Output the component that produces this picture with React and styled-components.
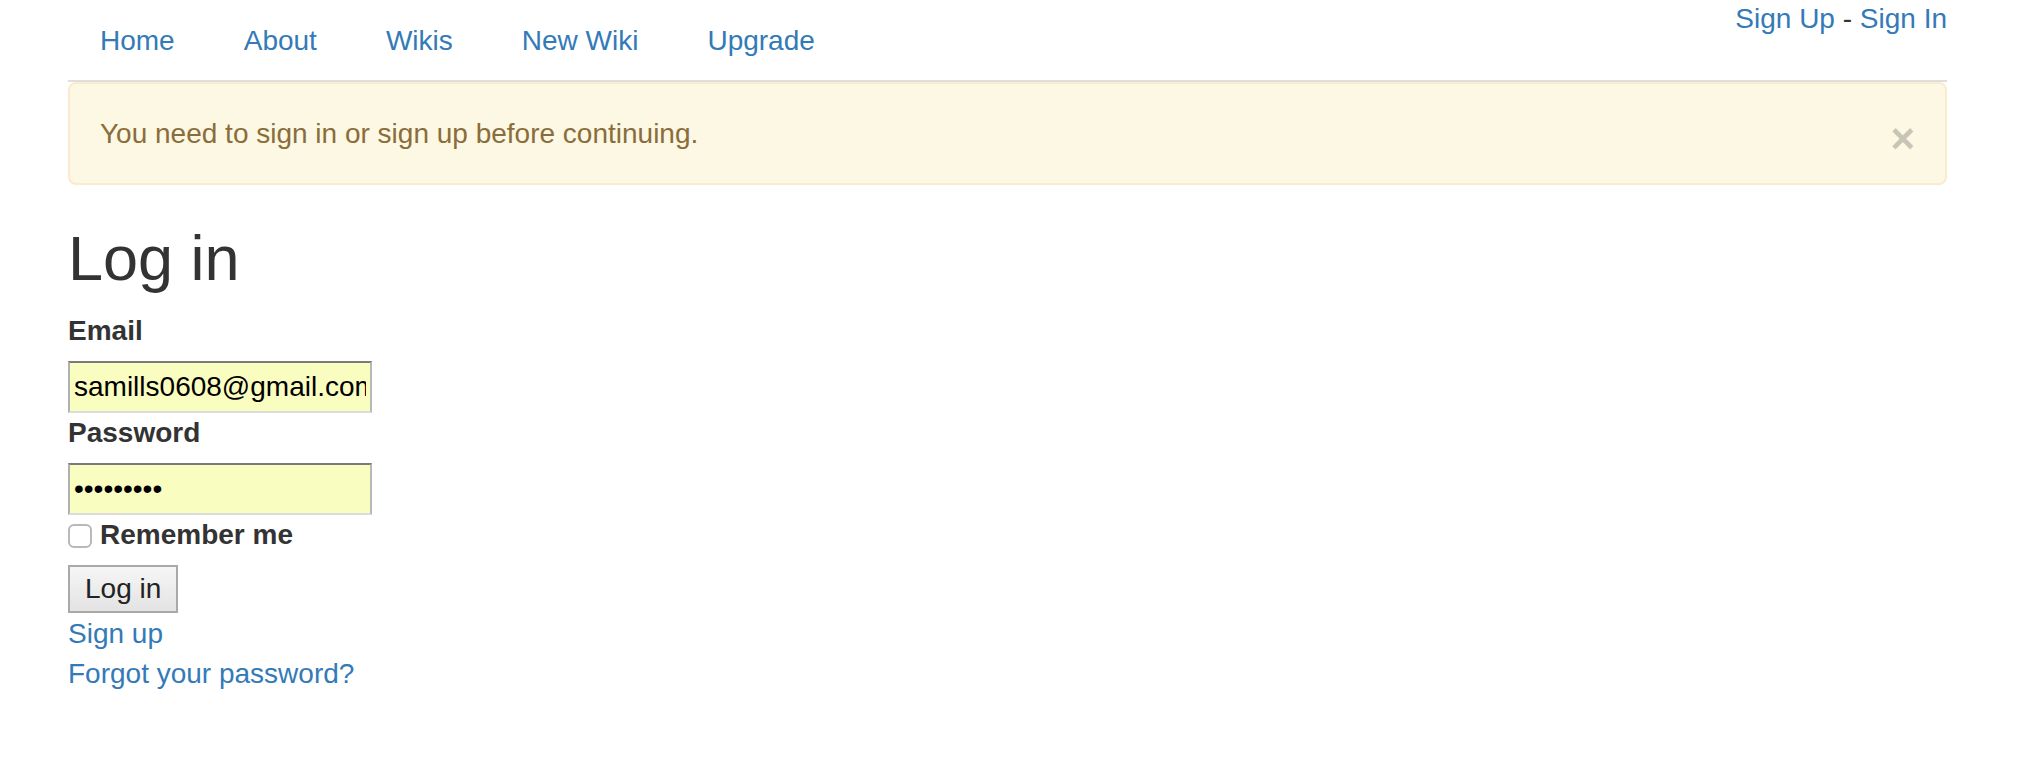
import styled, { createGlobalStyle } from 'styled-components';

const GlobalStyle = createGlobalStyle`
  body {
    margin: 0;
    background: #fff;
    color: #333;
    font-family: 'Liberation Sans', Helvetica, Arial, sans-serif;
    font-size: 28px;
    line-height: 40px;
  }
`;

const navItems = ['Home', 'About', 'Wikis', 'New Wiki', 'Upgrade'];

const App = () => {
  return (
    <>
      <GlobalStyle />
      <Container>
        <Header>
          <NavList>
            {navItems.map((item) => (
              <li key={item}>
                <NavLink href='#'>{item}</NavLink>
              </li>
            ))}
          </NavList>
          <AuthLinks>
            <Link href='#'>Sign Up</Link> - <Link href='#'>Sign In</Link>
          </AuthLinks>
        </Header>

        <Alert>
          <span className='message'>You need to sign in or sign up before continuing.</span>
          <CloseButton type='button' aria-label='Close'>
            ×
          </CloseButton>
        </Alert>

        <Title>Log in</Title>

        <form onSubmit={(e) => e.preventDefault()}>
          <Field>
            <Label htmlFor='user_email'>Email</Label>
            <TextInput id='user_email' type='email' defaultValue='samills0608@gmail.com' />
          </Field>
          <Field>
            <Label htmlFor='user_password'>Password</Label>
            <TextInput id='user_password' type='password' defaultValue='123456789' />
          </Field>
          <CheckRow>
            <Checkbox id='user_remember_me' type='checkbox' />
            <Label htmlFor='user_remember_me'>Remember me</Label>
          </CheckRow>
          <SubmitButton type='submit'>Log in</SubmitButton>
        </form>

        <BlockLink href='#'>Sign up</BlockLink>
        <BlockLink href='#'>Forgot your password?</BlockLink>
      </Container>
    </>
  );
};

const Container = styled.div`
  width: 1879px;
  margin-left: 68px;
`;

const Header = styled.div`
  display: flex;
  justify-content: space-between;
  align-items: flex-start;
  border-bottom: 2px solid #dedede;
`;

const NavList = styled.ul`
  display: flex;
  gap: 9px;
  margin: 0;
  padding: 0 0 0 2px;
  list-style: none;
`;

const NavLink = styled.a`
  display: block;
  padding: 21px 30px 19px;
  color: #337ab7;
  text-decoration: none;
`;

const Link = styled.a`
  color: #337ab7;
  text-decoration: none;
`;

const AuthLinks = styled.div`
  margin-top: -1px;
  white-space: nowrap;
`;

const Alert = styled.div`
  display: flex;
  align-items: center;
  padding: 29px 30px;
  background: #fcf8e3;
  border: 2px solid #faebcc;
  border-radius: 8px;
  color: #8a6d3b;

  .message {
    flex: 1;
    padding-top: 1px;
  }
`;

const CloseButton = styled.button`
  height: 40px;
  margin-top: 5px;
  margin-bottom: -5px;
  padding: 0;
  border: 0;
  background: transparent;
  font-family: 'Liberation Sans', Helvetica, Arial, sans-serif;
  font-size: 42px;
  font-weight: 700;
  line-height: 40px;
  color: #000;
  opacity: 0.2;
  text-shadow: 0 2px 0 #fff;
  cursor: pointer;
`;

const Title = styled.h2`
  margin: 40px 0 20px;
  font-size: 63px;
  font-weight: 500;
  line-height: 66px;
  color: #333;
`;

const Field = styled.div`
  display: flex;
  flex-direction: column;
  align-items: flex-start;
`;

const Label = styled.label`
  display: inline-block;
  margin-bottom: 10px;
  font-weight: 700;
`;

const TextInput = styled.input`
  box-sizing: border-box;
  width: 304px;
  height: 52px;
  margin: 0;
  padding: 0 4px;
  border: 2px solid;
  border-color: #7a7a7a #b8b8b8 #dcdcdc #b0b0b0;
  background: #fafdc0;
  color: #000;
  font-family: 'Liberation Sans', Helvetica, Arial, sans-serif;
  font-size: 28px;
  outline: none;
`;

const CheckRow = styled.div`
  display: flex;
  align-items: flex-start;
  gap: 8px;
`;

const Checkbox = styled.input`
  appearance: none;
  box-sizing: border-box;
  width: 24px;
  height: 24px;
  margin: 9px 0 0;
  border: 2px solid #b9b9b9;
  border-radius: 6px;
  background: #fff;
`;

const SubmitButton = styled.button`
  display: block;
  box-sizing: border-box;
  height: 48px;
  margin: 0 0 1px;
  padding: 0 15px;
  border: 2px solid #a9a9a9;
  background: linear-gradient(#f6f6f6, #e3e3e3);
  color: #222;
  font-family: 'Liberation Sans', Helvetica, Arial, sans-serif;
  font-size: 28px;
  line-height: 44px;
`;

const BlockLink = styled.a`
  display: block;
  width: fit-content;
  color: #337ab7;
  text-decoration: none;
`;

export default App;
